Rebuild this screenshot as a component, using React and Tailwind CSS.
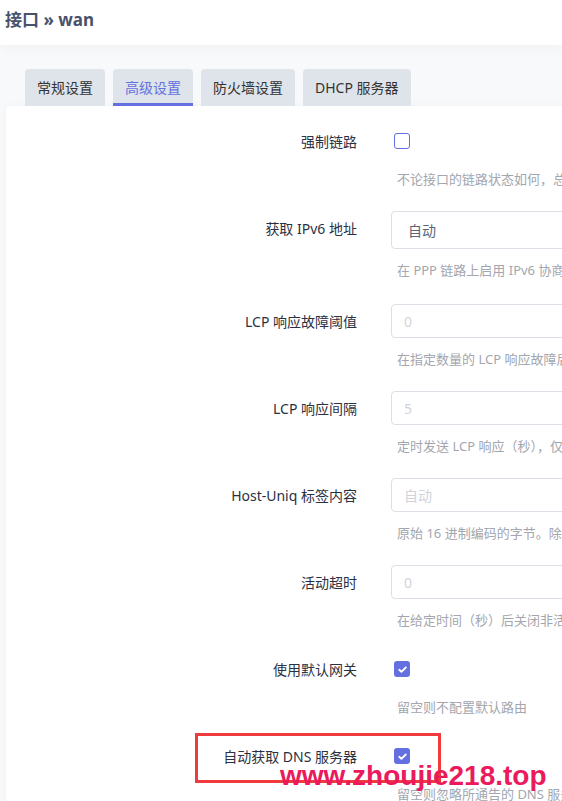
import React from "react";

const rows = [
  { label: "强制链路", type: "checkbox", checked: false, desc: "不论接口的链路状态如何，总是将其地址分配到接口上（选中后链路断开时不会调用 ifdown）" },
  { label: "获取 IPv6 地址", type: "select", value: "自动", desc: "在 PPP 链路上启用 IPv6 协商" },
  { label: "LCP 响应故障阈值", type: "input", placeholder: "0", desc: "在指定数量的 LCP 响应故障后假定链路已断开，0 为忽略故障" },
  { label: "LCP 响应间隔", type: "input", placeholder: "5", desc: "定时发送 LCP 响应（秒），仅在结合了故障阈值时有效" },
  { label: "Host-Uniq 标签内容", type: "input", placeholder: "自动", desc: "原始 16 进制编码的字节。除非您的 ISP 要求，否则请留空" },
  { label: "活动超时", type: "input", placeholder: "0", desc: "在给定时间（秒）后关闭非活动链路，0 为保持连接" },
  { label: "使用默认网关", type: "checkbox", checked: true, desc: "留空则不配置默认路由" },
  { label: "自动获取 DNS 服务器", type: "checkbox", checked: true, desc: "留空则忽略所通告的 DNS 服务器地址" },
];

const tabs = ["常规设置", "高级设置", "防火墙设置", "DHCP 服务器"];

const Checkbox = ({ checked }) =>
  checked ? (
    <span className="ml-[3px] flex h-4 w-4 items-center justify-center rounded-[3px] bg-[#6470e0]">
      <svg width="11" height="11" viewBox="0 0 12 12" fill="none">
        <path d="M2.5 6.3l2.3 2.2L9.6 3.8" stroke="#fff" strokeWidth="2" strokeLinecap="round" strokeLinejoin="round" />
      </svg>
    </span>
  ) : (
    <span className="ml-[3px] block h-4 w-4 rounded-[3px] border-[1.5px] border-[#6470e0] bg-white" />
  );

const Control = ({ row }) => {
  if (row.type === "checkbox") {
    return (
      <div className="flex h-[34px] items-center">
        <Checkbox checked={row.checked} />
      </div>
    );
  }
  if (row.type === "select") {
    return (
      <div className="flex h-[38px] w-[260px] items-center rounded-[4px] border border-[#dcdfe6] bg-white pl-4 text-[14px] text-[#5c6478]">
        {row.value}
      </div>
    );
  }
  return (
    <div className="flex h-[34px] w-[260px] items-center rounded-[4px] border border-[#dcdfe6] bg-white pl-3 text-[14px] text-[#d0d3da]">
      {row.placeholder}
    </div>
  );
};

const App = () => {
  return (
    <div
      className="relative min-h-screen w-full overflow-hidden bg-[#f8f9fb]"
      style={{ fontFamily: '"Noto Sans", "Noto Sans CJK SC", sans-serif' }}
    >
      <header className="flex h-[45px] items-center bg-white pb-[5px] pl-[5px] shadow-[0_4px_12px_rgba(0,0,0,0.03)]">
        <h1 className="text-[17px] font-bold text-[#48526a]">接口 » wan</h1>
      </header>

      <div className="mt-[24px] flex gap-[8px] pl-[25px]">
        {tabs.map((t, i) => (
          <div
            key={i}
            className={
              i === 1
                ? "flex h-[37px] items-center rounded-t-[4px] border-b-[3px] border-[#6470e0] bg-[#dfe3ea] px-[12px] pt-[3px] text-[14px] text-[#6470e0]"
                : "flex h-[37px] items-center rounded-t-[4px] bg-[#dfe3ea] px-[12px] text-[14px] text-[#333]"
            }
          >
            {t}
          </div>
        ))}
      </div>

      <div className="ml-[6px] w-[700px] rounded-tl-[4px] bg-white pt-[18px] shadow-[0_0_8px_rgba(0,0,0,0.04)]">
        {rows.map((row, i) => (
          <div key={i} className={row.type === "select" ? "flex pb-[24px]" : "flex pb-[22px]"}>
            <div className="flex h-[34px] w-[351px] shrink-0 items-center justify-end text-[14px] text-[#2c3142]">
              {row.label}
            </div>
            <div className="ml-[34px] flex flex-col">
              <Control row={row} />
              <div className="mt-[11px] whitespace-nowrap pl-[6px] text-[13px] leading-[20px] text-[#a3a6ae]">
                {row.desc}
              </div>
            </div>
          </div>
        ))}
      </div>

      <div className="absolute left-[195px] top-[733px] h-[50px] w-[246px] border-[3px] border-[#ef3b3b]" />
      <div
        className="absolute left-[280px] top-[755px] text-[28px] font-bold text-[#ea1a5c]"
        style={{ fontFamily: '"Liberation Sans", sans-serif' }}
      >
        www.zhoujie218.top
      </div>
    </div>
  );
};

export default App;
